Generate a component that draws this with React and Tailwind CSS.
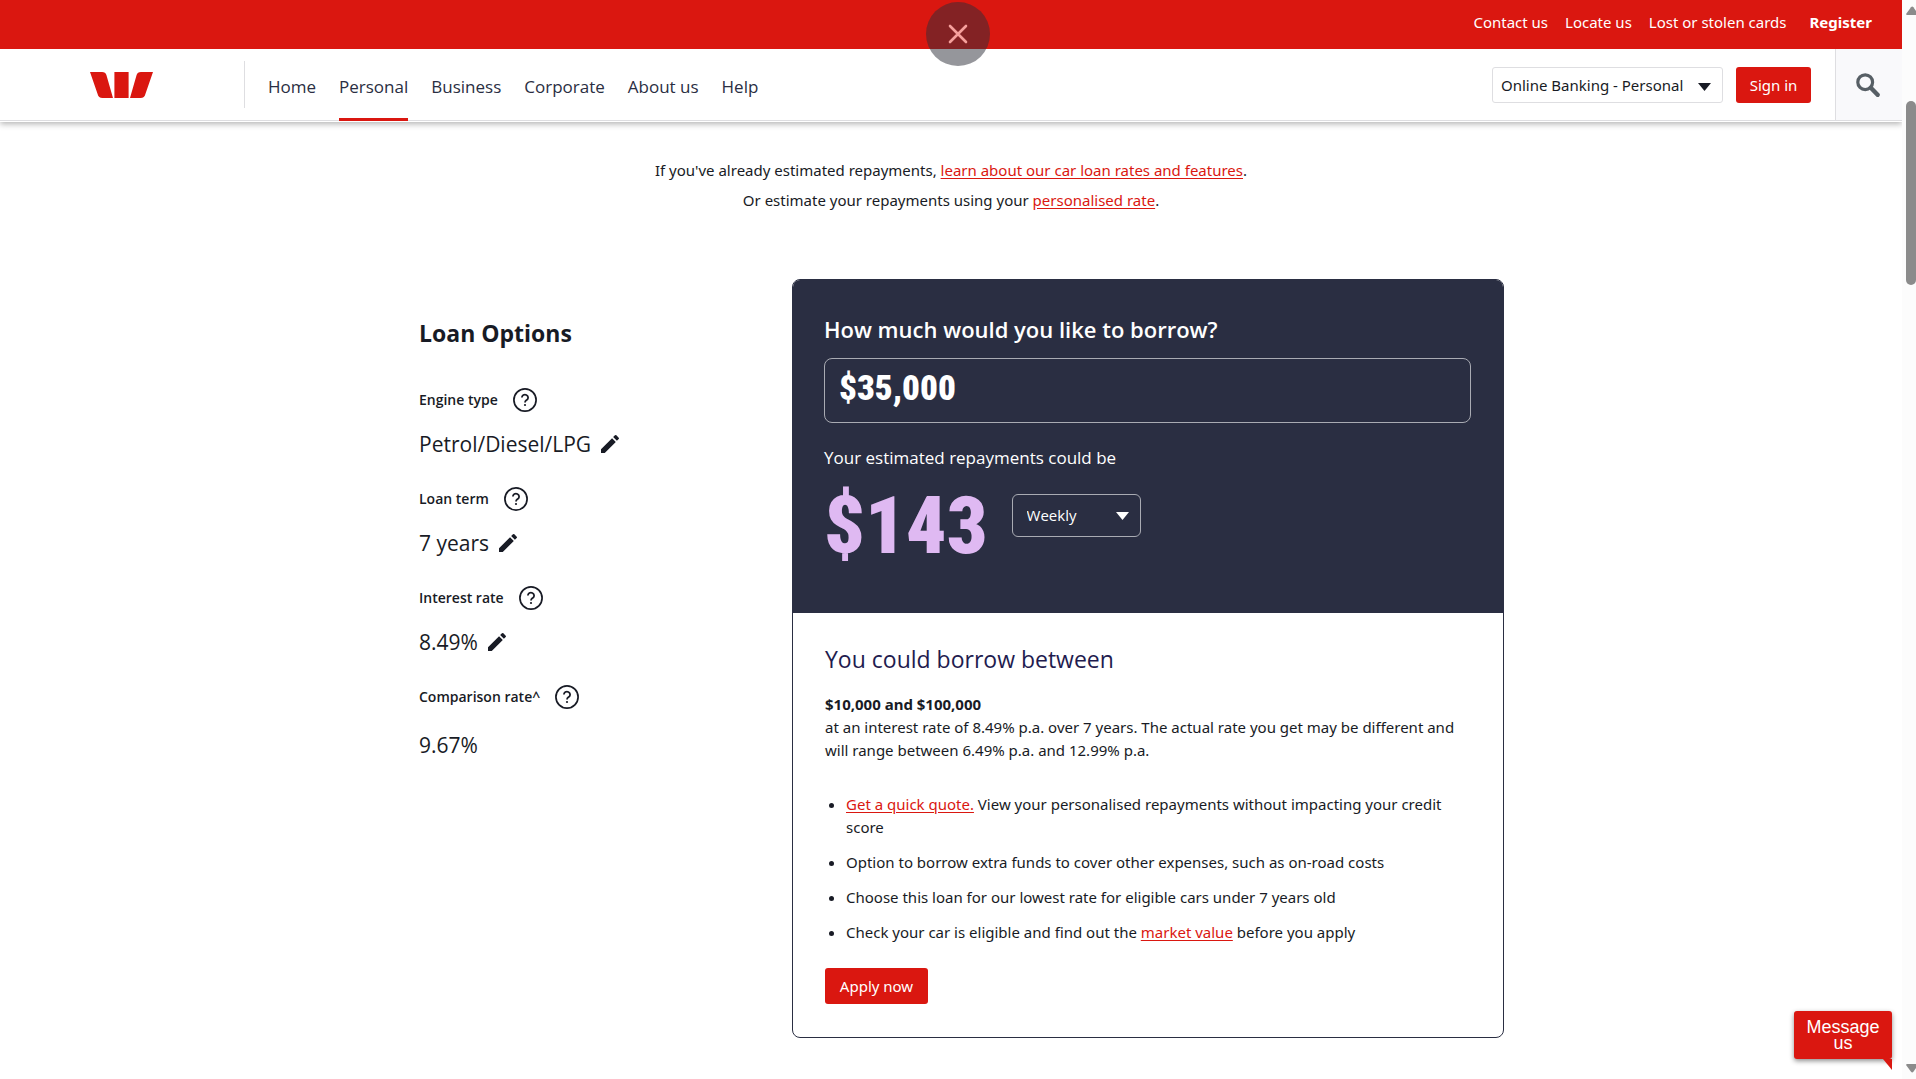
import { useState } from 'react';
import { MdEdit } from 'react-icons/md';

const topLinks = ['Contact us', 'Locate us', 'Lost or stolen cards'];
const navItems = ['Home', 'Personal', 'Business', 'Corporate', 'About us', 'Help'];

const loanOptions = [
  { label: 'Engine type', value: 'Petrol/Diesel/LPG', editable: true },
  { label: 'Loan term', value: '7 years', editable: true },
  { label: 'Interest rate', value: '8.49%', editable: true },
  { label: 'Comparison rate^', value: '9.67%', editable: false },
];

function Logo() {
  return (
    <svg width="63" height="26" viewBox="0 0 63 26" fill="#da1710" aria-hidden="true">
      <path d="M0 0H12Q15.6 0 16.4 3L23 26H12.5Q8.4 26 7.6 22Z" />
      <path d="M24.4 0H38.6V26H24.4Z" />
      <path d="M63 0H51Q47.4 0 46.6 3L40 26H50.5Q54.6 26 55.4 22Z" />
    </svg>
  );
}

function HelpIcon() {
  return (
    <svg width="24" height="24" viewBox="0 0 24 24" fill="none" stroke="#181b25" aria-hidden="true">
      <circle cx="12" cy="12" r="11.1" strokeWidth="1.7" />
      <path d="M8.9 9.6a3.1 2.9 0 1 1 4.9 2.3c-1.1.8-1.8 1.2-1.8 2.6" strokeWidth="1.8" />
      <circle cx="12" cy="17" r="1.1" fill="#181b25" stroke="none" />
    </svg>
  );
}

function Caret({ className }) {
  return (
    <svg width="13" height="8" viewBox="0 0 13 8" className={className} fill="currentColor" aria-hidden="true">
      <path d="M0 0H13L6.5 8Z" />
    </svg>
  );
}

function RedLink({ children }) {
  return <a href="#" className="text-[#da1710] underline underline-offset-2">{children}</a>;
}

function Header() {
  return (
    <header className="shadow-[0_2px_6px_rgba(0,0,0,0.3)] border-b border-white">
      <div className="h-[49px] bg-[#da1710] flex justify-end items-start pt-3 pr-[30px] gap-[17px] font-['Noto_Sans',sans-serif] text-[15px] leading-[21px] text-white">
        {topLinks.map(l => <a key={l} href="#">{l}</a>)}
        <a href="#" className="font-bold pl-1.5">Register</a>
      </div>
      <div className="h-[72px] bg-white border-b border-[#dedee1] flex items-stretch">
        <a href="#" aria-label="Westpac home" className="w-[244px] pl-[90px] pt-[23px]"><Logo /></a>
        <div className="w-px h-[47px] mt-3 bg-[#dedee1]" />
        <nav className="flex gap-[23px] ml-[23px] -mb-px text-[17px] leading-[24px] text-[#2a2e42]">
          {navItems.map(n => (
            <a key={n} href="#" className={`pt-[26px] border-b-[3px] ${n === 'Personal' ? 'border-[#da1710]' : 'border-transparent'}`}>{n}</a>
          ))}
        </nav>
        <div className="flex-1" />
        <div className="relative self-start mt-[18px] mr-[13px]">
          <select aria-label="Online service" className="appearance-none w-[231px] h-9 pl-2 border border-[#dedee1] rounded-[3px] bg-white font-['Noto_Sans',sans-serif] text-[15px] text-[#181b25]">
            <option>Online Banking - Personal</option>
          </select>
          <Caret className="absolute right-3 top-4 text-[#181b25] pointer-events-none" />
        </div>
        <button className="self-start mt-[18px] mr-6 w-[75px] h-9 rounded-[3px] bg-[#da1710] text-white font-['Noto_Sans',sans-serif] text-[15px]">Sign in</button>
        <button aria-label="Search" className="w-[67px] border-l border-[#dedee1] bg-[#f9f9fb] pl-5 pt-6 flex items-start">
          <svg width="24" height="24" viewBox="0 0 24 24" fill="none" stroke="#575f65" aria-hidden="true">
            <circle cx="9.2" cy="9.2" r="7.4" strokeWidth="3.2" />
            <path d="M14.8 14.8L21.6 21.8" strokeWidth="4.4" strokeLinecap="round" />
          </svg>
        </button>
      </div>
    </header>
  );
}

function LoanOptions() {
  return (
    <section className="w-[373px] pt-10">
      <h2 className="text-[23px] leading-7 font-bold">Loan Options</h2>
      <dl className="pt-[41px]">
        {loanOptions.map(o => (
          <div key={o.label} className="h-[99px]">
            <dt className="flex items-center gap-[15px] text-[14px] leading-6 font-semibold">
              {o.label}
              <button aria-label={`About ${o.label}`}><HelpIcon /></button>
            </dt>
            <dd className={`flex items-center gap-[7px] text-[21px] leading-8 ${o.editable ? 'pt-4' : 'pt-5'}`}>
              {o.value}
              {o.editable && <button aria-label={`Edit ${o.label}`}><MdEdit size={24} /></button>}
            </dd>
          </div>
        ))}
      </dl>
    </section>
  );
}

function Calculator() {
  const [amount, setAmount] = useState('$35,000');

  return (
    <section className="flex-1 rounded-lg border border-[#2a2e42] overflow-hidden">
      <div className="bg-[#2a2e42] text-white pl-[31px] pr-8 pt-[34px] pb-[43px]">
        <label htmlFor="amount" className="block text-[22px] leading-[30px] font-semibold">How much would you like to borrow?</label>
        <input
          id="amount"
          value={amount}
          onChange={e => setAmount(e.target.value)}
          className="mt-3.5 w-full h-[65px] pl-3.5 pb-1 rounded-lg border border-[#a9abb3] bg-transparent font-['Roboto_Condensed',Roboto,sans-serif] font-black text-[35px] leading-none"
        />
        <p className="mt-[23px] text-[17px] leading-6">Your estimated repayments could be</p>
        <div className="flex items-start gap-6 mt-3">
          <output htmlFor="amount" className="font-['Roboto_Condensed',Roboto,sans-serif] font-black text-[80px] leading-[88px] text-[#dfb9f2]">$143</output>
          <div className="relative mt-3">
            <select aria-label="Repayment frequency" className="appearance-none w-[129px] h-[43px] pl-3.5 rounded-md border border-[#a9abb3] bg-transparent text-[15px]">
              <option>Weekly</option>
            </select>
            <Caret className="absolute right-3 top-[18px] pointer-events-none" />
          </div>
        </div>
      </div>
      <div className="px-8 pt-[30px] pb-[33px] font-['Noto_Sans',sans-serif] text-[15px] leading-[23px]">
        <h3 className="font-['Open_Sans',sans-serif] text-[23px] leading-8 text-[#1f1c4f]">You could borrow between</h3>
        <p className="mt-[18px]"><strong>$10,000 and $100,000</strong></p>
        <p>at an interest rate of 8.49% p.a. over 7 years. The actual rate you get may be different and will range between 6.49% p.a. and 12.99% p.a.</p>
        <ul className="mt-[31px] pl-[21px] list-disc space-y-3">
          <li><RedLink>Get a quick quote.</RedLink> View your personalised repayments without impacting your credit score</li>
          <li>Option to borrow extra funds to cover other expenses, such as on-road costs</li>
          <li>Choose this loan for our lowest rate for eligible cars under 7 years old</li>
          <li>Check your car is eligible and find out the <RedLink>market value</RedLink> before you apply</li>
        </ul>
        <button className="mt-6 w-[103px] h-9 rounded-[3px] bg-[#da1710] text-white">Apply now</button>
      </div>
    </section>
  );
}

function Scrollbar() {
  return (
    <div className="w-3.5 bg-[#fcfcfc] flex flex-col items-end overflow-hidden text-[#8b8b8b]" aria-hidden="true">
      <svg width="10" height="10" viewBox="0 0 10 10" className="mt-1.5 shrink-0" fill="currentColor">
        <path d="M5 1.2Q6.2-.4 7.4 1.2L10 5V9H1.2Q-.4 9 .4 7.4Z" />
      </svg>
      <div className="w-2.5 h-[184px] mt-[85px] rounded-[5px] bg-[#8b8b8b]" />
      <svg width="10" height="10" viewBox="0 0 10 10" className="mt-auto mb-[5px] shrink-0" fill="currentColor">
        <path d="M5 7.8Q6.2 9.4 7.4 7.8L10 4V0H1.2Q-.4 0 .4 1.6Z" />
      </svg>
    </div>
  );
}

export default function App() {
  return (
    <div className="relative flex min-h-screen bg-white text-[#181b25] font-['Open_Sans',sans-serif]">
      <div className="flex-1">
        <Header />
        <main>
          <p className="pt-[33px] text-center font-['Noto_Sans',sans-serif] text-[15px] leading-[30px]">
            If you've already estimated repayments, <RedLink>learn about our car loan rates and features</RedLink>.<br />
            Or estimate your repayments using your <RedLink>personalised rate</RedLink>.
          </p>
          <div className="max-w-[1170px] mx-auto mt-16 pl-[53px] pr-8 flex">
            <LoanOptions />
            <Calculator />
          </div>
        </main>
      </div>
      <Scrollbar />

      <button aria-label="Close" className="absolute left-1/2 -translate-x-1/2 top-0.5 w-16 h-16 rounded-full bg-[#2c2d37]/50 flex items-center justify-center">
        <svg width="20" height="20" viewBox="0 0 20 20" stroke="#f6a09c" strokeWidth="2.6" strokeLinecap="round" aria-hidden="true">
          <path d="M2 2L18 18M18 2L2 18" />
        </svg>
      </button>

      <button className="absolute right-6 bottom-5 w-[98px] h-12 px-2 rounded-[3px] bg-[#da1710] text-white font-['Liberation_Sans',sans-serif] text-[18px] leading-4 shadow-[0_2px_5px_rgba(0,0,0,0.45)]">
        Message us
        <svg width="9" height="11" viewBox="0 0 9 11" className="absolute right-0 top-full" fill="#da1710" aria-hidden="true">
          <path d="M0 0H9V11Z" />
        </svg>
      </button>
    </div>
  );
}
